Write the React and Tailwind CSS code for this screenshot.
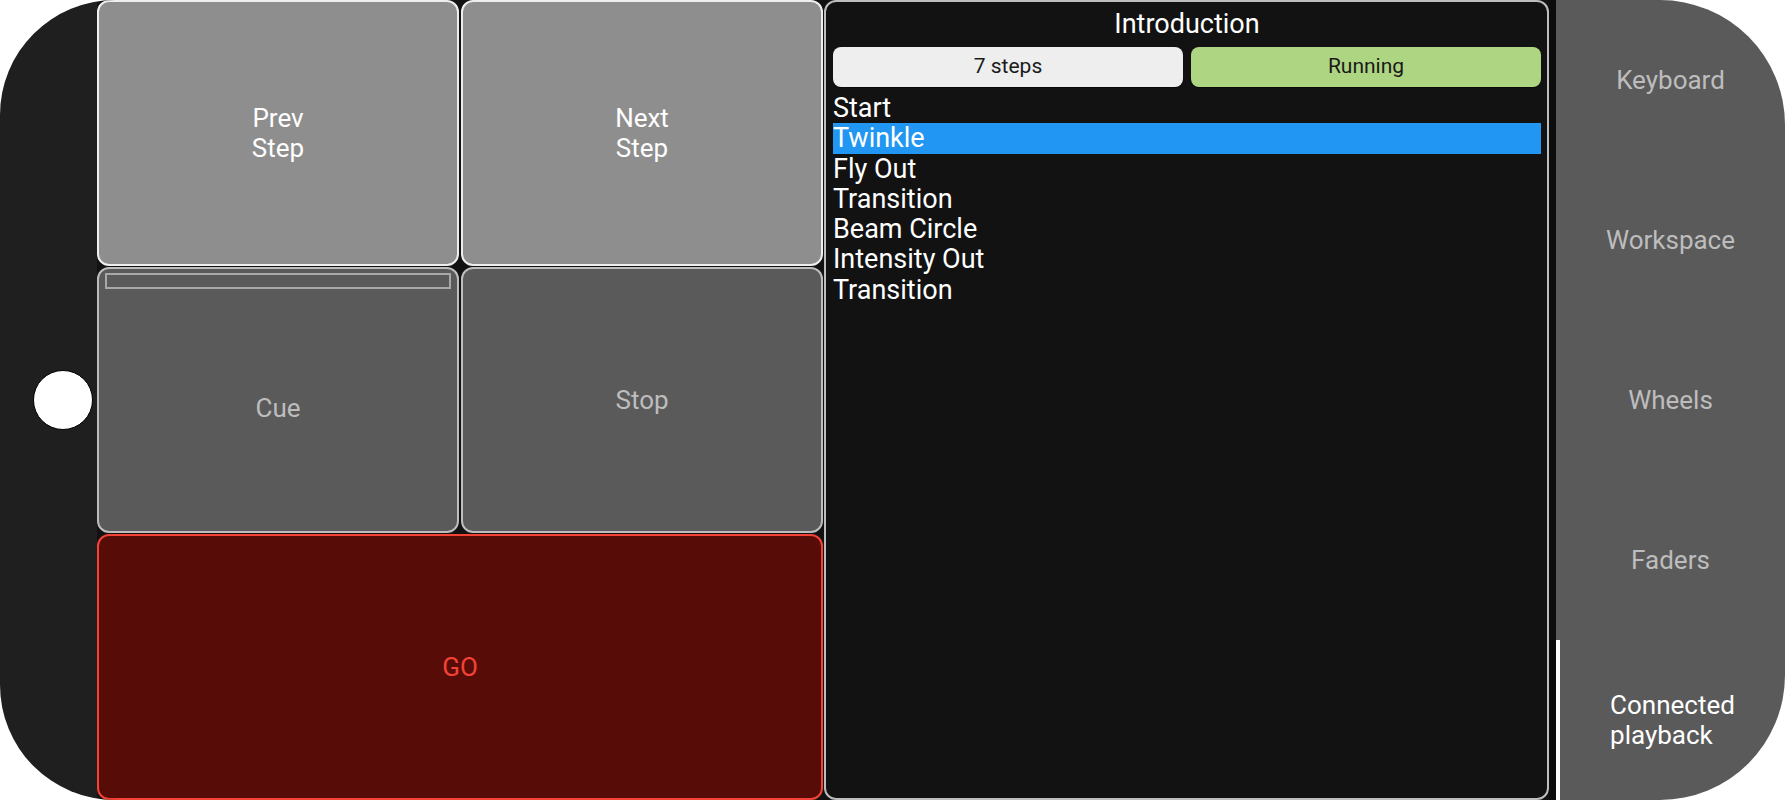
import React from 'react'

const steps = [
  'Start',
  'Twinkle',
  'Fly Out',
  'Transition',
  'Beam Circle',
  'Intensity Out',
  'Transition',
]

const tabs = ['Keyboard', 'Workspace', 'Wheels', 'Faders', 'Connected playback']

function PadButton({ children, className }) {
  return (
    <div
      className={`flex items-center justify-center rounded-[12px] border-2 text-center text-[26px] leading-[30px] ${className}`}
    >
      {children}
    </div>
  )
}

export default function App() {
  const current = 1
  const selectedTab = 4

  return (
    <div
      className="h-[800px] w-[1785px] bg-white"
      style={{ fontFamily: 'Roboto, "Noto Sans", sans-serif' }}
    >
      <div className="flex h-full w-full overflow-hidden rounded-l-[115px] rounded-r-[125px]">
        {/* bezel */}
        <div className="flex h-full w-[97px] shrink-0 items-center bg-[#1f1f1f] pl-[33px]">
          <div className="h-[60px] w-[60px] rounded-full border border-black bg-white" />
        </div>

        {/* main */}
        <div className="flex h-full flex-1 bg-[#121212]">
          <div className="grid h-full w-[726px] shrink-0 grid-cols-2 grid-rows-3 gap-x-[2px] gap-y-[1px]">
            <PadButton className="border-[#eeeeee] bg-[#8e8e8e] text-white">
              Prev
              <br />
              Step
            </PadButton>
            <PadButton className="border-[#eeeeee] bg-[#8e8e8e] text-white">
              Next
              <br />
              Step
            </PadButton>
            <div className="flex flex-col rounded-[12px] border-2 border-[#bdbdbd] bg-[#5a5a5a] p-[4px]">
              <div className="mx-[2px] h-[16px] border-2 border-[#a8a8a8]" />
              <div className="flex flex-1 items-center justify-center text-[26px] text-[#bdbdbd]">
                Cue
              </div>
            </div>
            <PadButton className="border-[#bdbdbd] bg-[#5a5a5a] text-[#bdbdbd]">Stop</PadButton>
            <PadButton className="col-span-2 border-[#f44336] bg-[#570c07] text-[#f44336]">
              GO
            </PadButton>
          </div>

          {/* cue list */}
          <div className="ml-[1px] flex h-full w-[725px] shrink-0 flex-col rounded-[12px] border-2 border-[#bdbdbd] bg-[#121212] pl-[7px] pr-[6px]">
            <div className="flex h-[45px] items-center justify-center text-[27px] text-white">
              Introduction
            </div>
            <div className="flex h-[40px] gap-[8px] text-[21px] text-[#1a1a1a]">
              <div className="flex flex-1 items-center justify-center rounded-[8px] bg-[#eeeeee] shadow-[0_1px_1px_rgba(0,0,0,0.5)]">
                7 steps
              </div>
              <div className="flex flex-1 items-center justify-center rounded-[8px] bg-[#aed581] shadow-[0_1px_1px_rgba(0,0,0,0.5)]">
                Running
              </div>
            </div>
            <div className="mt-[6px] flex flex-col">
              {steps.map((s, i) => (
                <div
                  key={i}
                  className={`flex h-[30.3px] items-center text-[27px] text-white ${
                    i === current ? 'bg-[#2196f3]' : ''
                  }`}
                >
                  {s}
                </div>
              ))}
            </div>
          </div>
          <div className="h-full flex-1 bg-[#0c0c0c]" />
        </div>

        {/* nav */}
        <div className="flex h-full w-[229px] shrink-0 flex-col bg-[#5a5a5a]">
          {tabs.map((t, i) => (
            <div
              key={t}
              className={`flex h-[160px] items-center justify-center text-[26px] leading-[30px] ${
                i === selectedTab
                  ? 'border-l-4 border-white text-white'
                  : 'text-[#bdbdbd]'
              }`}
            >
              {i === selectedTab ? (
                <div className="text-left">
                  Connected
                  <br />
                  playback
                </div>
              ) : (
                t
              )}
            </div>
          ))}
        </div>
      </div>
    </div>
  )
}
